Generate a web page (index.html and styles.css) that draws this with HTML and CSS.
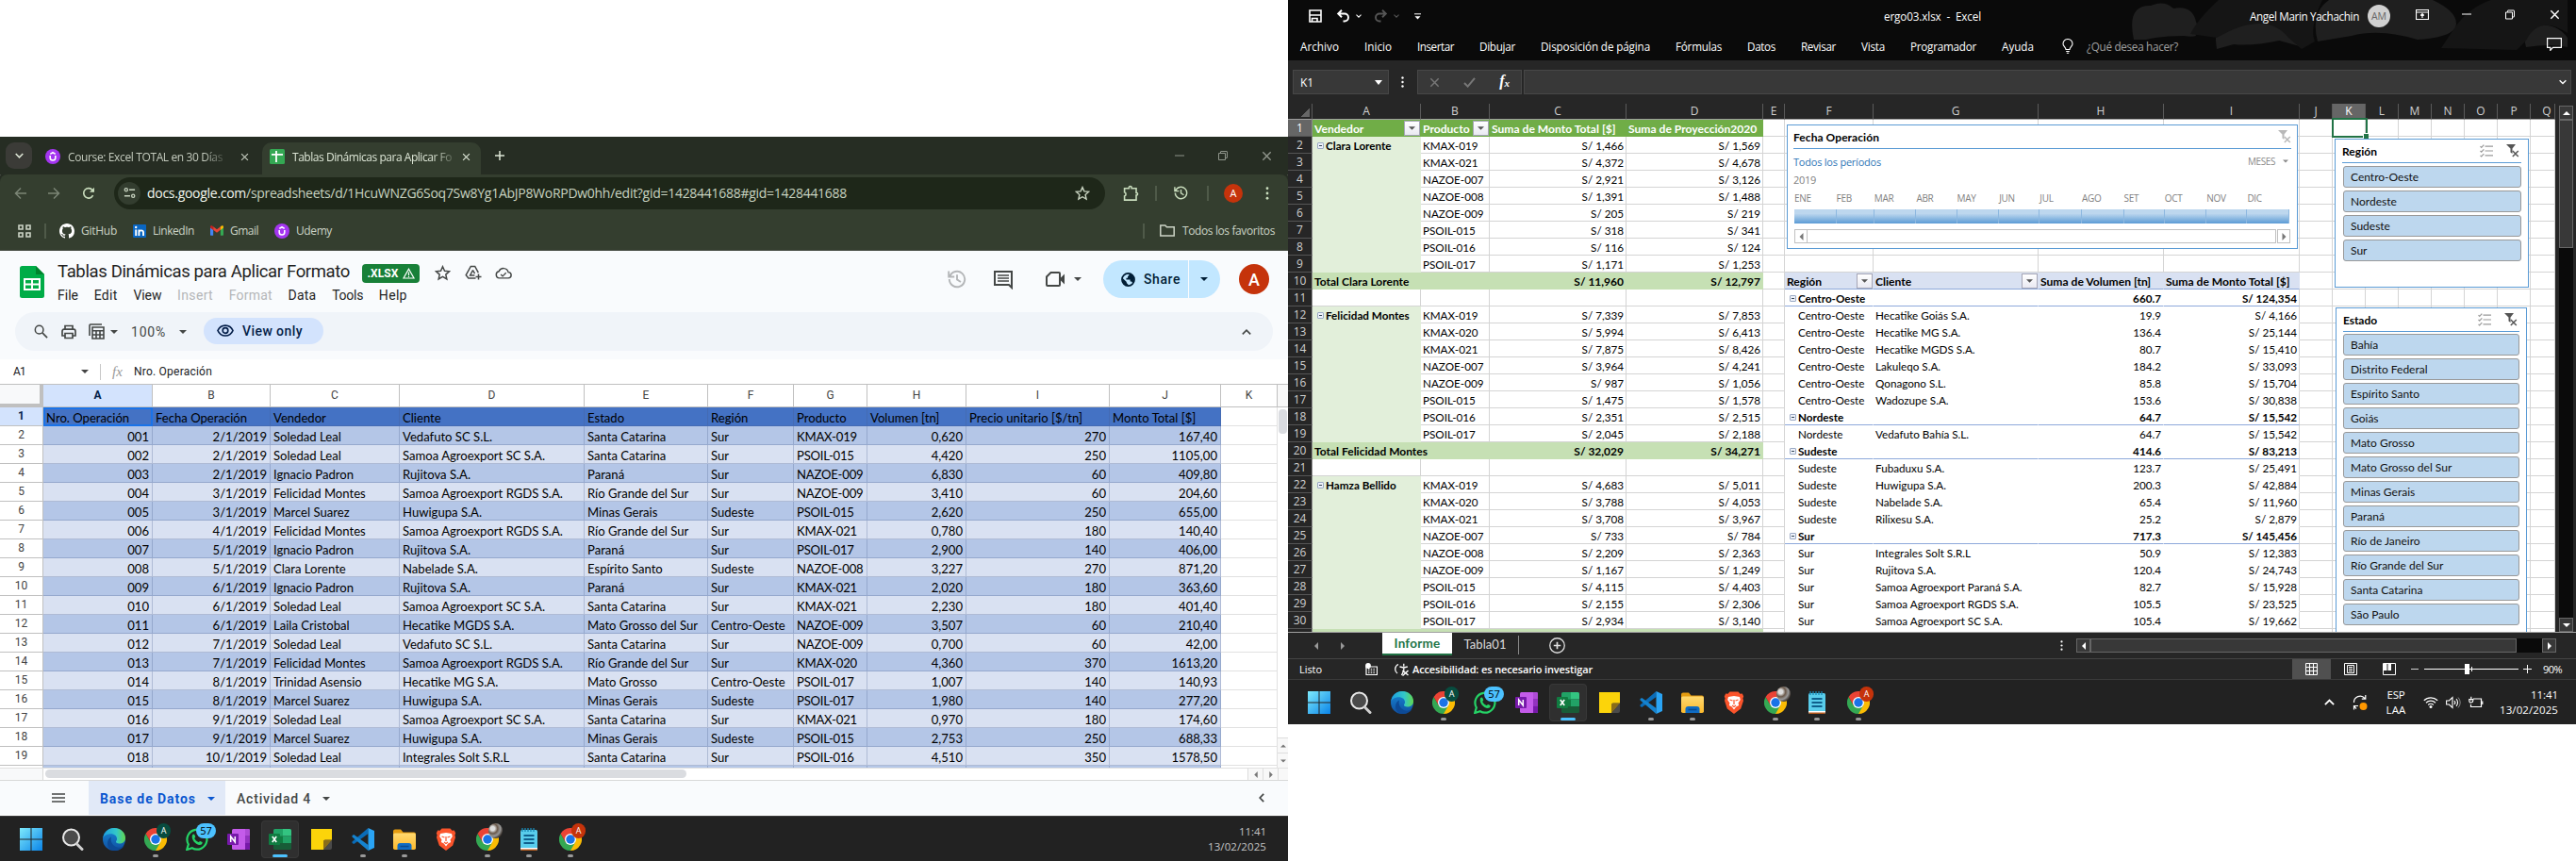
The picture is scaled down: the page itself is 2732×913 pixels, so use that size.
FILE: index.html
```html
<!DOCTYPE html>
<html lang="es">
<head>
<meta charset="utf-8">
<title>ergo03</title>
<link rel="stylesheet" href="styles.css">
</head>
<body>
<svg class="defs" aria-hidden="true">
  <defs>
    <linearGradient id="gWin" x1="0" y1="0" x2="1" y2="1"><stop offset="0" stop-color="#7eeafc"/><stop offset="1" stop-color="#0a84e8"/></linearGradient>
    <linearGradient id="gEdge" x1="0" y1="0" x2="1" y2="0"><stop offset="0" stop-color="#1c9de0"/><stop offset=".6" stop-color="#33c8c8"/><stop offset="1" stop-color="#62d84e"/></linearGradient>
    <linearGradient id="gEdge2" x1="0" y1="0" x2="0" y2="1"><stop offset="0" stop-color="#1787d6"/><stop offset="1" stop-color="#1050a0"/></linearGradient>
    <linearGradient id="gFold" x1="0" y1="0" x2="0" y2="1"><stop offset="0" stop-color="#ffd970"/><stop offset="1" stop-color="#fcb92c"/></linearGradient>
  </defs>
  <symbol id="udemy" viewBox="0 0 16 16"><circle cx="8" cy="8" r="8" fill="#a435f0"/><path d="M5.2 7v2.2a2.8 2.8 0 0 0 5.6 0V7M5.3 5.4 8 3.7l2.7 1.7" fill="none" stroke="#fff" stroke-width="1.6"/></symbol>
  <symbol id="gsheet" viewBox="0 0 16 16"><rect width="16" height="16" rx="1.5" fill="#34a853"/><path d="M2 5.800h12M7 2v12" stroke="#fff" stroke-width="1.8"/></symbol>
  <symbol id="close" viewBox="0 0 10 10"><path d="M1.2 1.2l7.6 7.6M8.8 1.2 1.2 8.8" stroke="currentColor" stroke-width="1.3" fill="none"/></symbol>
  <symbol id="plus" viewBox="0 0 12 12"><path d="M6 1v10M1 6h10" stroke="currentColor" stroke-width="1.5"/></symbol>
  <symbol id="min" viewBox="0 0 10 10"><path d="M0 5h10" stroke="currentColor"/></symbol>
  <symbol id="restore" viewBox="0 0 10 10"><path d="M.5 2.5h7v7h-7zM2.5 2.3V.9q0-.4.4-.4H9q.5 0 .5.5v6.1q0 .4-.4.4H7.7" fill="none" stroke="currentColor"/></symbol>
  <symbol id="back" viewBox="0 0 14 14"><path d="M13 7H1.8M7 1.5 1.5 7 7 12.5" fill="none" stroke="currentColor" stroke-width="1.5"/></symbol>
  <symbol id="fwd" viewBox="0 0 14 14"><path d="M1 7h11.2M7 1.5 12.5 7 7 12.5" fill="none" stroke="currentColor" stroke-width="1.5"/></symbol>
  <symbol id="reload" viewBox="0 0 14 14"><path d="M11.6 9.2A5.2 5.2 0 1 1 11 3.6l1.3 1.4" fill="none" stroke="currentColor" stroke-width="1.6"/><path d="M13 .8v5H8z" fill="currentColor"/></symbol>
  <symbol id="tune" viewBox="0 0 14 14"><path d="M6.5 3.5H13M1 10.5h6.5" stroke="currentColor" stroke-width="1.6"/><circle cx="3" cy="3.5" r="1.7" fill="none" stroke="currentColor" stroke-width="1.4"/><circle cx="11" cy="10.5" r="1.7" fill="none" stroke="currentColor" stroke-width="1.4"/></symbol>
  <symbol id="star" viewBox="0 0 16 16"><path d="M8 1.6l1.9 4.3 4.7.5-3.5 3.1 1 4.6L8 11.7l-4.1 2.4 1-4.6L1.4 6.4l4.7-.5z" fill="none" stroke="currentColor" stroke-width="1.4"/></symbol>
  <symbol id="puzzle" viewBox="0 0 16 16"><path d="M1.5 3.5H6V2.7a1.3 1.3 0 0 1 2.6 0v.8h4.6V8h.6a1.3 1.3 0 0 1 0 2.4h-.6v4.8H1.5v-4a2 2 0 0 0 0-3.8z" fill="none" stroke="currentColor" stroke-width="1.5"/></symbol>
  <symbol id="history" viewBox="0 0 20 20"><path d="M2.3 7.2A8.2 8.2 0 1 1 1.8 10M1.2 1.5v6h6M10 5.2v5.2l4 2.6" fill="none" stroke="currentColor" stroke-width="1.9"/></symbol>
  <symbol id="dots" viewBox="0 0 4 16"><circle cx="2" cy="2" r="1.6" fill="currentColor"/><circle cx="2" cy="8" r="1.6" fill="currentColor"/><circle cx="2" cy="14" r="1.6" fill="currentColor"/></symbol>
  <symbol id="apps" viewBox="0 0 14 14"><path d="M1 1h4v4H1zM9 1h4v4H9zM1 9h4v4H1zM9 9h4v4H9z" fill="none" stroke="currentColor" stroke-width="1.6"/></symbol>
  <symbol id="github" viewBox="0 0 16 16"><path fill="#fff" d="M8 0C3.58 0 0 3.58 0 8c0 3.54 2.29 6.53 5.47 7.59.4.07.55-.17.55-.38 0-.19-.01-.82-.01-1.49-2.01.37-2.53-.49-2.69-.94-.09-.23-.48-.94-.82-1.13-.28-.15-.68-.52-.01-.53.63-.01 1.08.58 1.23.82.72 1.21 1.87.87 2.33.66.07-.52.28-.87.51-1.07-1.78-.2-3.64-.89-3.64-3.95 0-.87.31-1.59.82-2.15-.08-.2-.36-1.02.08-2.12 0 0 .67-.21 2.2.82.64-.18 1.32-.27 2-.27s1.36.09 2 .27c1.53-1.04 2.2-.82 2.2-.82.44 1.1.16 1.92.08 2.12.51.56.82 1.27.82 2.15 0 3.07-1.87 3.75-3.65 3.95.29.25.54.73.54 1.48 0 1.07-.01 1.93-.01 2.2 0 .21.15.46.55.38A8.01 8.01 0 0 0 16 8c0-4.42-3.58-8-8-8z"/></symbol>
  <symbol id="linkedin" viewBox="0 0 14 14"><rect width="14" height="14" rx="1" fill="#0a66c2"/><path d="M3.2 5.5V12M6.4 5.5V12M6.4 8.6c0-3 4.6-3 4.6 0V12" fill="none" stroke="#fff" stroke-width="1.9"/><circle cx="3.2" cy="3" r="1.2" fill="#fff"/></symbol>
  <symbol id="gmail" viewBox="0 0 16 12"><path d="M0 2v9.2q0 .8.8.8H3.6V4.5z" fill="#4285f4"/><path d="M16 2v9.2q0 .8-.8.8h-2.8V4.5z" fill="#34a853"/><path d="M3.6 5.2V1.2L8 4.5l4.4-3.3v4L8 8.5z" fill="#ea4335"/><path d="M0 1.6v1L3.6 5.3V1.2L2.7.5C1.5-.4 0 .2 0 1.6z" fill="#c5221f"/><path d="M16 1.6v1l-3.6 2.7V1.2l.9-.7C14.5-.4 16 .2 16 1.6z" fill="#fbbc04"/></symbol>
  <symbol id="folder" viewBox="0 0 16 13"><path d="M.8 1h5l1.6 1.8h7.8V12H.8z" fill="none" stroke="currentColor" stroke-width="1.5"/></symbol>
  <symbol id="drive" viewBox="0 0 18 18"><path d="M11.5 15H3.8L1.2 11.7 6.3 2.5h4.4l3.6 6.6M8.5 6.5 5.6 12h4.8M8.5 6.5l2 3.6" fill="none" stroke="currentColor" stroke-width="1.5"/><path d="M14.5 10.5v6M11.5 13.5h6" stroke="currentColor" stroke-width="1.5"/></symbol>
  <symbol id="cloud" viewBox="0 0 20 14"><path d="M5 13a4 4 0 0 1-.4-7.9A5.8 5.8 0 0 1 15.6 6 3.5 3.5 0 0 1 15.5 13z" fill="none" stroke="currentColor" stroke-width="1.6"/><path d="M6.8 8.6l2.2 2.2 4-4" fill="none" stroke="currentColor" stroke-width="1.5"/></symbol>
  <symbol id="comment" viewBox="0 0 20 20"><path d="M1 1h18v17l-3-3H1z" fill="none" stroke="currentColor" stroke-width="2"/><path d="M4 5h12M4 8h12M4 11h12" stroke="currentColor" stroke-width="1.7"/></symbol>
  <symbol id="meet" viewBox="0 0 20 16"><path d="M5.5 1H14q1 0 1 1v12q0 1-1 1H2q-1 0-1-1V5.5z" fill="none" stroke="currentColor" stroke-width="2"/><path d="M15 7.5 20 2.5v11l-5-5z" fill="currentColor"/></symbol>
  <symbol id="globe" viewBox="0 0 16 16"><circle cx="8" cy="8" r="7" fill="none" stroke="currentColor" stroke-width="1.8"/><path d="M1.5 6l4.7 4.6v1.2L8 13.5V15A7 7 0 0 1 1.5 6zM9 1.2V3L7.5 4.6v1.6H5.8V8h4.4v2h1.6l1.4 2.2A7 7 0 0 0 9 1.2z" fill="currentColor"/></symbol>
  <symbol id="caret" viewBox="0 0 8 4"><path d="M0 0h8L4 4z" fill="currentColor"/></symbol>
  <symbol id="mag" viewBox="0 0 16 16"><circle cx="6" cy="6" r="4.6" fill="none" stroke="currentColor" stroke-width="1.6"/><path d="M9.5 9.5 15 15" stroke="currentColor" stroke-width="1.8"/></symbol>
  <symbol id="print" viewBox="0 0 16 16"><path d="M4 5V1.5h8V5M4 12H1V7.5Q1 5.2 3 5.2h10q2 0 2 2.3V12h-3M4 9.5h8v5H4z" fill="none" stroke="currentColor" stroke-width="1.7"/></symbol>
  <symbol id="calc" viewBox="0 0 17 17"><path d="M1 13V2q0-1 1-1h12" fill="none" stroke="currentColor" stroke-width="1.6"/><path d="M4 4h12v12H4zM4.5 7.7h11M8 8v8M12 8v8M4 12h12" fill="none" stroke="currentColor" stroke-width="1.6"/></symbol>
  <symbol id="eye" viewBox="0 0 18 13"><path d="M1 6.5C4-.8 14-.8 17 6.5 14 13.8 4 13.8 1 6.5z" fill="none" stroke="currentColor" stroke-width="1.7"/><circle cx="9" cy="6.5" r="2.8" fill="none" stroke="currentColor" stroke-width="1.7"/></symbol>
  <symbol id="cup" viewBox="0 0 10 6"><path d="M.8 5.4 5 1.2l4.200 4.200" fill="none" stroke="currentColor" stroke-width="1.6"/></symbol>
  <symbol id="cdown" viewBox="0 0 10 6"><path d="M.8.8 5 5 9.200.8" fill="none" stroke="currentColor" stroke-width="1.7"/></symbol>
  <symbol id="cleft" viewBox="0 0 6 10"><path d="M5.200.8 1.200 5l4 4.200" fill="none" stroke="currentColor" stroke-width="1.7"/></symbol>
  <symbol id="burger" viewBox="0 0 14 10"><path d="M0 1h14M0 5h14M0 9h14" stroke="currentColor" stroke-width="1.5"/></symbol>
  <symbol id="tl" viewBox="0 0 4 8"><path d="M4 0v8L0 4z" fill="currentColor"/></symbol>
  <symbol id="tr" viewBox="0 0 4 8"><path d="M0 0v8l4-4z" fill="currentColor"/></symbol>
  <symbol id="tu" viewBox="0 0 8 4"><path d="M0 4h8L4 0z" fill="currentColor"/></symbol>
  <symbol id="save" viewBox="0 0 14 14"><path d="M1 1h12v12H1zM3.500 13V9.500h5.500V13" fill="none" stroke="currentColor" stroke-width="1.600"/><path d="M1 6h12" stroke="currentColor" stroke-width="1.500"/></symbol>
  <symbol id="undo" viewBox="0 0 14 14"><path d="M1.500 4.500H8.500a4 4 0 0 1 0 8H7M5.500.8 1.700 4.500l3.800 3.700" fill="none" stroke="currentColor" stroke-width="1.900"/></symbol>
  <symbol id="redo" viewBox="0 0 14 14"><path d="M12.500 4.500H5.500a4 4 0 0 0 0 8H7M8.500.8l3.800 3.700-3.800 3.700" fill="none" stroke="currentColor" stroke-width="1.900"/></symbol>
  <symbol id="ribbon" viewBox="0 0 14 11"><path d="M.5.5h13v10H.5zM.5 3h13M7 9V4.800M5.200 6.500 7 4.700l1.800 1.800" fill="none" stroke="currentColor" stroke-width="1.200"/></symbol>
  <symbol id="bulb" viewBox="0 0 12 16"><path d="M4 11.500C4 9 1 8.200 1 5.500a5 5 0 0 1 10 0C11 8.200 8 9 8 11.500zM4.200 13.500h3.600M4.800 15.300h2.400" fill="none" stroke="currentColor" stroke-width="1.100"/></symbol>
  <symbol id="bubble" viewBox="0 0 16 14"><path d="M.6.6h14.800v9.800H6.500L3.800 13.400v-3H.6z" fill="none" stroke="currentColor" stroke-width="1.200"/></symbol>
  <symbol id="check" viewBox="0 0 14 12"><path d="M1 6.500l4 4L13 1" fill="none" stroke="currentColor" stroke-width="2.200"/></symbol>
  <symbol id="multi" viewBox="0 0 14 14"><path d="M5.500 2.200H14M5.500 7H14M5.500 11.800H14M.5 2.200l1.200 1.200L4.300.6M.5 7l1.200 1.200L4.300 5.400M.5 11.800 1.700 13l2.600-2.800" fill="none" stroke="currentColor" stroke-width="1.200"/></symbol>
  <symbol id="funnel" viewBox="0 0 14 14"><path d="M0 0h10L6.500 4.500V10l-2-1.500v-4z" fill="currentColor"/><path d="M6.800 7l6 6M12.800 7l-6 6" stroke="currentColor" stroke-width="1.500"/></symbol>
  <symbol id="addc" viewBox="0 0 16 16"><circle cx="8" cy="8" r="7.300" fill="none" stroke="currentColor" stroke-width="1.200"/><path d="M8 4.500v7M4.500 8h7" stroke="currentColor" stroke-width="1.600"/></symbol>
  <symbol id="macro" viewBox="0 0 13 13"><path d="M1 4h11.500v8.500H1z" fill="none" stroke="currentColor" stroke-width="1.200"/><path d="M3 6.500h8M3 8.500h8M3 10.500h8" stroke="currentColor" stroke-dasharray="1.500 1.200"/><circle cx="3" cy="3" r="2.900" fill="currentColor"/></symbol>
  <symbol id="access" viewBox="0 0 16 14"><path d="M4 1.500a5.500 5.500 0 0 0-1 9.500M9.800.8v3M5.500 4l4.300 1 4-1M9.800 5v3l-2.300 5" fill="none" stroke="currentColor" stroke-width="1.300"/><path d="M8.500 8l6 5M14.500 8l-6 5.500" stroke="currentColor" stroke-width="1.500"/></symbol>
  <symbol id="vgrid" viewBox="0 0 13 13"><path d="M.5.5h12v12H.5zM.5 4.500h12M.5 8.500h12M4.500.5v12M8.500.5v12" fill="none" stroke="currentColor"/></symbol>
  <symbol id="vpage" viewBox="0 0 14 13"><path d="M.5.5h13v12H.5zM3.500 2.500h7v8h-7zM5 4.500h4M5 6.500h4M5 8.500h4" fill="none" stroke="currentColor"/></symbol>
  <symbol id="vbreak" viewBox="0 0 14 13"><path d="M.5.5h13v12H.5z" fill="none" stroke="currentColor"/><path d="M1 1h3.500v7H1zM5.500 1H9v7H5.500z" fill="currentColor"/></symbol>
  <symbol id="sync" viewBox="0 0 18 18"><path d="M2.500 9A6.500 6.500 0 0 1 14 4.500M14.800 1v4.200h-4M5 15.500A6.500 6.500 0 0 1 3 12.500M2.500 16.500v-4H7" fill="none" stroke="#fff" stroke-width="1.200"/><circle cx="12.500" cy="13" r="4" fill="#ff9800"/></symbol>
  <symbol id="wifi" viewBox="0 0 16 13"><path d="M.8 4.800a10.300 10.300 0 0 1 14.400 0M3 7.200a7.200 7.200 0 0 1 10 0M5.200 9.500a4 4 0 0 1 5.600 0" fill="none" stroke="#fff" stroke-width="1.200"/><circle cx="8" cy="11.500" r="1.500" fill="#fff"/></symbol>
  <symbol id="vol" viewBox="0 0 16 14"><path d="M.6 5h2.800L7 1.500v11L3.400 9H.6zM9 5a3 3 0 0 1 0 4M11 3.200a5.500 5.500 0 0 1 0 7.600" fill="none" stroke="#fff" stroke-width="1.100"/><path d="M13 1.500a8 8 0 0 1 0 11" fill="none" stroke="#888"/></symbol>
  <symbol id="batt" viewBox="0 0 16 13"><path d="M5 3h8.500v8.500h-11V9M14.800 5.500v3.500M2.800.8v4M.8 3.500h4v1.200q0 2-2 2.300t-2-2.300z" fill="none" stroke="#fff" stroke-width="1.200"/></symbol>
  <symbol id="t-win" viewBox="0 0 24 24"><path d="M0 0h11.500v11.500H0zM12.500 0H24v11.500H12.500zM0 12.500h11.500V24H0zM12.500 12.500H24V24H12.500z" fill="url(#gWin)"/></symbol>
  <symbol id="t-search" viewBox="0 0 24 24"><circle cx="10.500" cy="10" r="8.500" fill="#4b4b4b" stroke="#e8e8e8" stroke-width="2"/><path d="M16.500 17 22 22.500" stroke="#d0d0d0" stroke-width="3" stroke-linecap="round"/></symbol>
  <symbol id="t-edge" viewBox="0 0 24 24"><circle cx="12" cy="12" r="12" fill="url(#gEdge2)"/><path d="M.2 11C1 4.500 6 0 12 0c7 0 12 5 12 10.500 0 4-3 6-6.500 6-2.500 0-4-1-3.500-2.200 1-1.300 1-2 1-3 0-2.500-2.500-5-6.500-5C4.500 6.300.8 8.500.2 11z" fill="url(#gEdge)"/><path d="M9 9.500c-1.500 5 2 10 6.500 11 3 .6 5.500-.3 7.500-2.500-2 4-6 6-10 6-5 0-8-3.500-8-7.500C5 13 6.800 10.500 9 9.500z" fill="#0d4a96"/></symbol>
  <symbol id="t-chrome" viewBox="0 0 24 24"><path d="M12 12V6h10.400A12 12 0 0 1 12 24z" fill="#fbbc04"/><path d="M12 12 6.800 15 1.600 6A12 12 0 0 0 12 24l5.200-9z" fill="#34a853"/><path d="M12 6H22.400A12 12 0 0 0 1.600 6l5.200 9z" fill="#ea4335"/><circle cx="12" cy="12" r="6" fill="#fff"/><circle cx="12" cy="12" r="4.700" fill="#1a73e8"/></symbol>
  <symbol id="t-wa" viewBox="0 0 24 24"><path d="M1.200 23 2.800 17.300A10.500 10.500 0 1 1 6.800 21.300z" fill="none" stroke="#25d366" stroke-width="2.200"/><path d="M7 7.500c.8-1.300 2-1.200 2.400-.3l.8 2c.2.700-1 1.500-1 1.900 1 2 2.300 3.200 4.300 4 .5 0 1.200-1.300 1.800-1.200l2.200 1.100c.5.400 0 2.200-1.500 2.800C11.500 19 5.200 12.500 7 7.500z" fill="#25d366"/></symbol>
  <symbol id="t-one" viewBox="0 0 24 24"><rect x="5" y="1" width="19" height="22" rx="1.500" fill="#c45bea"/><path d="M19 1h3.500Q24 1 24 2.500V8h-5z" fill="#ae4bd5"/><path d="M19 8h5v7.500h-5z" fill="#9332bf"/><path d="M19 15.500h5v6q0 1.500-1.500 1.500H19z" fill="#7719aa"/><rect y="6" width="12" height="12" rx="1" fill="#7719aa"/><path d="M3.700 15V9l4.600 6V9" fill="none" stroke="#fff" stroke-width="1.500"/></symbol>
  <symbol id="t-excel" viewBox="0 0 24 24"><path d="M5 2.500Q5 1 6.500 1H15v11H5z" fill="#21a366"/><path d="M15 1h7.500Q24 1 24 2.500V8.500h-9z" fill="#33c481"/><path d="M5 8.500h10V16H5z" fill="#107c41"/><path d="M15 8.500h9V16h-9z" fill="#21a366"/><path d="M5 16h19v5.500q0 1.500-1.500 1.500h-16Q5 23 5 21.500z" fill="#185c37"/><rect y="6" width="12" height="12" rx="1" fill="#107c41"/><path d="M3.800 9l4.400 6M8.200 9l-4.400 6" stroke="#fff" stroke-width="1.600"/></symbol>
  <symbol id="t-note" viewBox="0 0 24 24"><path d="M1 1h22v11.500l-9 10.500H1z" fill="#fcd40a"/><path d="M23 12.500V21q0 2-2 2h-7z" fill="#4a4a4a"/><path d="M14 23V14.500q0-2 2-2h7z" fill="#333"/><path d="M14 15q0-2.500 2.500-2.500H23L14 23z" fill="#e0a800" opacity=".5"/></symbol>
  <symbol id="t-code" viewBox="0 0 24 24"><path d="M17.500 0v6L2.300 17 .5 16v-1.500z" fill="#0a6cb8"/><path d="M17.500 24V18L2.300 7 .5 8v1.500z" fill="#1583cf"/><path d="M17.500 0 24 3v18l-6.500 3z" fill="#2aa4f4"/></symbol>
  <symbol id="t-dir" viewBox="0 0 24 24"><path d="M0 3.500Q0 1.500 2 1.500h6l2.500 3H22q2 0 2 2V12H0z" fill="#e59c10"/><rect y="5.500" width="24" height="17.500" rx="1.800" fill="url(#gFold)"/><path d="M4.500 23v-4q0-3 3-3h9q3 0 3 3v4z" fill="#0f6cc4"/><path d="M7.500 19.500h9" stroke="#0a4b90" stroke-width="1.600"/></symbol>
  <symbol id="t-brave" viewBox="0 0 24 24"><path d="M7.500.5h9l2 2.200 2.300-.2 1.400 3-.8 2 .6 2.500-2.800 8.500L12 24l-7.200-5.500L2 10l.6-2.500-.8-2 1.400-3 2.300.2z" fill="#fb542b"/><path d="M6 6l6-1 6 1 .8 3-2.300 3.500.7 2.500-3 1.500L12 19.500l-2.200-3-3-1.500.7-2.500L5.200 9z" fill="#fff"/><path d="M7.500 9l3 1M16.500 9l-3 1M12 9v5M10 15l2 1.500 2-1.500" stroke="#fb542b" stroke-width="1.200" fill="none"/></symbol>
  <symbol id="t-pad" viewBox="0 0 24 24"><rect x="3" y="2" width="18" height="22" rx="1.500" fill="#59cdeb"/><path d="M3 21h18v1.500q0 1.500-1.500 1.500h-15Q3 24 3 22.500z" fill="#b35a1f"/><path d="M3 21h18v1.500H3z" fill="#fff"/><path d="M6.500 8h11M6.500 12h11M6.500 16h11" stroke="#0f5f8c" stroke-width="1.800"/><path d="M5 0v4M8 0v4M11 0v4M14 0v4M17 0v4" stroke="#1a89b5" stroke-width="1.300"/></symbol>
</svg>

<div class="desk">
<section class="win chrome">
  <div class="tabstrip">
    <div class="tabsearch"><svg width="9" height="6"><use href="#cdown"/></svg></div>
    <div class="tab"><svg width="16" height="16"><use href="#udemy"/></svg><span class="tname"><span data-w="164">Course: Excel TOTAL en 30 Días</span></span><svg width="9" height="9"><use href="#close"/></svg></div>
    <div class="tab active"><svg width="16" height="16"><use href="#gsheet"/></svg><span class="tname wide"><span data-w="169">Tablas Dinámicas para Aplicar Fo</span></span><svg width="9" height="9"><use href="#close"/></svg></div>
    <svg class="newtab" width="12" height="12"><use href="#plus"/></svg>
    <div class="wctl"><svg width="10" height="10"><use href="#min"/></svg><svg width="10" height="10"><use href="#restore"/></svg><svg width="11" height="11"><use href="#close"/></svg></div>
  </div>
  <div class="nav">
    <svg class="dim" width="14" height="14"><use href="#back"/></svg>
    <svg class="dim n-fwd" width="14" height="14"><use href="#fwd"/></svg>
    <svg class="n-rel" width="14" height="14"><use href="#reload"/></svg>
    <div class="omni"><span class="tunec"><svg width="13" height="13"><use href="#tune"/></svg></span><span class="url" data-w="742"><b>docs.google.com</b>/spreadsheets/d/1HcuWNZG6Soq7Sw8Yg1AbJP8WoRPDw0hh/edit?gid=1428441688#gid=1428441688</span><svg class="push" width="16" height="16"><use href="#star"/></svg></div>
    <svg class="n-ext" width="17" height="17"><use href="#puzzle"/></svg><i class="vbar n-v"></i>
    <svg class="n-hist" width="15" height="15"><use href="#history"/></svg><i class="vbar n-v"></i>
    <span class="ava s20">A</span><svg class="n-dots" width="4" height="14"><use href="#dots"/></svg>
  </div>
  <div class="marks">
    <svg width="14" height="14"><use href="#apps"/></svg><i class="vbar m-v"></i>
    <div class="mark"><svg width="16" height="16"><use href="#github"/></svg><span data-w="38">GitHub</span></div>
    <div class="mark"><svg width="14" height="14"><use href="#linkedin"/></svg><span data-w="44">LinkedIn</span></div>
    <div class="mark"><svg width="14" height="11"><use href="#gmail"/></svg><span data-w="30">Gmail</span></div>
    <div class="mark"><svg width="16" height="16"><use href="#udemy"/></svg><span data-w="38">Udemy</span></div>
    <i class="vbar push"></i><svg class="m-f" width="16" height="13"><use href="#folder"/></svg><span data-w="98">Todos los favoritos</span>
  </div>
  <div class="gdoc">
    <svg class="glogo" width="26" height="34" viewBox="0 0 26 34"><path d="M2.500 0H17l9 9v22.500q0 2.500-2.500 2.500h-21Q0 34 0 31.500v-29Q0 0 2.500 0z" fill="#00ac47"/><path d="M17 0l9 9h-9z" fill="#00832d"/><path d="M5 14h16v11H5zM5 19.500h16M13 14v11" fill="none" stroke="#fff" stroke-width="2"/></svg>
    <div class="gmid">
      <div class="grow"><span class="gtitle" data-w="310">Tablas Dinámicas para Aplicar Formato</span>
        <span class="badge"><span data-w="33">.XLSX</span><svg width="13" height="12" viewBox="0 0 13 12"><path d="M6.500 1.200l5.500 9.800H1zM6.500 4.500v3.500M6.500 8.800v1.300" fill="none" stroke="#fff" stroke-width="1.200"/></svg></span>
        <svg class="g1" width="17" height="17"><use href="#star"/></svg><svg class="g2" width="18" height="18"><use href="#drive"/></svg><svg class="g3" width="18" height="13"><use href="#cloud"/></svg></div>
      <div class="gmenu"><span data-w="22">File</span><span data-w="25">Edit</span><span data-w="30">View</span><span class="off" data-w="38">Insert</span><span class="off" data-w="46">Format</span><span data-w="30">Data</span><span data-w="33">Tools</span><span data-w="30">Help</span></div>
    </div>
    <svg class="h1 off" width="20" height="20"><use href="#history"/></svg>
    <svg class="h2" width="20" height="20"><use href="#comment"/></svg>
    <svg class="h3" width="20" height="16"><use href="#meet"/></svg><svg class="h4" width="8" height="4"><use href="#caret"/></svg>
    <div class="share"><svg width="15" height="15"><use href="#globe"/></svg><span data-w="39">Share</span><i></i><svg width="8" height="4"><use href="#caret"/></svg></div>
    <span class="ava s32">A</span>
  </div>
  <div class="gbar">
    <svg width="15" height="15"><use href="#mag"/></svg><svg class="b1" width="16" height="16"><use href="#print"/></svg><svg class="b2" width="17" height="17"><use href="#calc"/></svg><svg class="b3" width="8" height="4"><use href="#caret"/></svg>
    <span class="b4" data-w="37">100%</span><svg class="b5" width="8" height="4"><use href="#caret"/></svg>
    <div class="vo"><svg width="18" height="13"><use href="#eye"/></svg><span data-w="64">View only</span></div>
    <svg class="push" width="10" height="6"><use href="#cup"/></svg>
  </div>
  <div class="gfx"><span class="ref" data-w="13">A1</span><svg width="8" height="4"><use href="#caret"/></svg><i></i><em>fx</em><span data-w="83">Nro. Operación</span></div>
  <div class="gsheet"><div class="ggrid" id="ggrid"></div><div class="gv"><i class="gvtop"></i><i class="gvthumb"></i><span class="push"><svg width="6" height="4"><use href="#tu"/></svg></span><span><svg width="6" height="4"><use href="#caret"/></svg></span></div></div>
  <div class="ghs"><i class="gh0"></i><i class="ghthumb"></i><span class="push"><svg width="4" height="7"><use href="#tl"/></svg></span><span><svg width="4" height="7"><use href="#tr"/></svg></span><b></b></div>
  <div class="gtabs"><svg width="14" height="10"><use href="#burger"/></svg><div class="gt on"><span data-w="102">Base de Datos</span><svg width="8" height="4"><use href="#caret"/></svg></div><div class="gt"><span data-w="79">Actividad 4</span><svg width="8" height="4"><use href="#caret"/></svg></div><svg class="push" width="6" height="10"><use href="#cleft"/></svg></div>
  <div class="taskbar"><div class="tiles"></div><div class="clock dimclock"><span data-w="29">11:41</span><span data-w="62">13/02/2025</span></div></div>
</section>

<section class="win excel">
  <div class="xtop">
    <svg class="pattern" width="460" height="64" viewBox="0 0 460 64"><g fill="#1f1f1f"><path d="M0 42Q-8 5 18 6q14-6 24 3 20-4 24 14 4 8-1 10 6 8-12 5-24 0-40 4z"/><path d="M88 52Q82 16 108 18q28-8 44 6 20 0 22 18l2 7-22-6q-28 6-48 4z"/><path d="M195 44q-8-30 12-44h110q30 14 24 30-8 10-40 12-40-12-70-4z"/><path d="M416 50q-6-22 14-24 20 0 30 14v10q-18-4-44 0z"/></g><g fill="#151515"><path d="M60 36q8-16 30-36h110q-14 30-8 44l-14 8-14-12Q140 10 88 40z"/><path d="M340 30Q360 0 400-5h60v40q-30-20-44 8l-10 10-80-2z"/></g></svg>
    <div class="xtitle">
      <svg width="14" height="14"><use href="#save"/></svg><svg class="q1" width="15" height="14"><use href="#undo"/></svg><svg class="q2" width="6" height="4"><use href="#cdown"/></svg><svg class="q3 dimx" width="15" height="14"><use href="#redo"/></svg><svg class="q2 dimx" width="6" height="4"><use href="#cdown"/></svg><svg class="q4" width="7" height="7" viewBox="0 0 7 7"><path d="M0 .8h7" stroke="#fff"/><path d="M.5 3.200h6L3.500 6.500z" fill="#fff"/></svg>
      <span class="fname" data-w="103">ergo03.xlsx&nbsp; -&nbsp; Excel</span>
      <span class="user" data-w="116">Angel Marin Yachachin</span><span class="am">AM</span>
      <svg class="w0" width="14" height="11"><use href="#ribbon"/></svg><svg class="w1" width="10" height="10"><use href="#min"/></svg><svg class="w2" width="10" height="11"><use href="#restore"/></svg><svg class="w3" width="11" height="11"><use href="#close"/></svg>
    </div>
    <div class="xmenu"><span data-w="41">Archivo</span><span data-w="29">Inicio</span><span data-w="39">Insertar</span><span data-w="38">Dibujar</span><span data-w="116">Disposición de página</span><span data-w="49">Fórmulas</span><span data-w="30">Datos</span><span data-w="37">Revisar</span><span data-w="25">Vista</span><span data-w="70">Programador</span><span data-w="34">Ayuda</span><svg class="k1" width="12" height="16"><use href="#bulb"/></svg><span class="ask" data-w="97">¿Qué desea hacer?</span><svg class="k2" width="16" height="14"><use href="#bubble"/></svg></div>
  </div>
  <div class="xfx">
    <div class="xbox name"><span data-w="14">K1</span><svg width="8" height="5" viewBox="0 0 8 5"><path d="M0 0h8L4 5z" fill="#fff"/></svg></div><svg class="f1" width="3" height="12"><use href="#dots"/></svg>
    <div class="xbox btns"><svg width="11" height="11"><use href="#close"/></svg><svg width="13" height="11"><use href="#check"/></svg><em>f<sub>x</sub></em></div>
    <div class="xbox long"><svg width="8" height="6"><use href="#cdown"/></svg></div>
  </div>
  <div class="xsheet">
    <div class="xgrid" id="xgrid"></div>
    <div class="xv"><span><svg width="8" height="4"><use href="#tu"/></svg></span><i></i><span class="push"><svg width="8" height="4"><use href="#caret"/></svg></span></div>
    <div class="cursor"><i></i></div>
    <div class="timeline">
      <div class="thead"><b data-w="91">Fecha Operación</b><svg width="14" height="14"><use href="#funnel"/></svg></div>
      <div class="tper"><span data-w="93">Todos los períodos</span><span class="mes"><span data-w="29">MESES</span><svg width="6" height="4"><use href="#caret"/></svg></span></div>
      <div class="tyear"><span data-w="24">2019</span></div>
      <div class="months" id="months"></div>
      <div class="tbar"><i></i><i></i><i></i><i></i><i></i><i></i><i></i><i></i><i></i><i></i><i></i><i></i></div>
      <div class="tscroll"><span><svg width="5" height="8"><use href="#tl"/></svg></span><i></i><span class="gap"><svg width="5" height="8"><use href="#tr"/></svg></span></div>
    </div>
    <div class="slicer reg"><div class="shead"><b data-w="37">Región</b><svg class="mu" width="14" height="14"><use href="#multi"/></svg><svg width="14" height="14"><use href="#funnel"/></svg></div><div class="opts" id="reg"></div></div>
    <div class="slicer est"><div class="shead"><b data-w="36">Estado</b><svg class="mu" width="14" height="14"><use href="#multi"/></svg><svg width="14" height="14"><use href="#funnel"/></svg></div><div class="opts" id="est"></div></div>
  </div>
  <div class="xtabs"><svg class="ar" width="4" height="8"><use href="#tl"/></svg><svg class="ar2" width="4" height="8"><use href="#tr"/></svg><div class="xt on"><span data-w="49">Informe</span></div><div class="xt t2"><span data-w="45">Tabla01</span></div><svg class="add" width="17" height="17"><use href="#addc"/></svg><svg class="xd" width="3" height="11"><use href="#dots"/></svg><div class="xh"><span><svg width="4" height="8"><use href="#tl"/></svg></span><i></i><span class="push"><svg width="4" height="8"><use href="#tr"/></svg></span></div></div>
  <div class="xstat"><span data-w="24">Listo</span><svg class="s1" width="13" height="13"><use href="#macro"/></svg><svg class="s2" width="16" height="14"><use href="#access"/></svg><b class="s3" data-w="191">Accesibilidad: es necesario investigar</b>
    <div class="views"><span class="on"><svg width="13" height="13"><use href="#vgrid"/></svg></span><span><svg width="14" height="13"><use href="#vpage"/></svg></span><span><svg width="14" height="13"><use href="#vbreak"/></svg></span></div>
    <svg class="z1" width="8" height="9"><use href="#min"/></svg><div class="zoom"><i></i></div><svg class="z2" width="9" height="9" viewBox="0 0 9 9"><path d="M4.500 0v9M0 4.500h9" stroke="#fff"/></svg><span class="z3" data-w="20">90%</span></div>
  <div class="taskbar"><div class="tiles"></div>
    <div class="tray"><svg width="11" height="7"><use href="#cup"/></svg><svg class="y1" width="18" height="18"><use href="#sync"/></svg><div class="lang"><span data-w="19">ESP</span><span data-w="21">LAA</span></div><svg class="y2" width="16" height="13"><use href="#wifi"/></svg><svg class="y3" width="16" height="14"><use href="#vol"/></svg><svg class="y4" width="16" height="13"><use href="#batt"/></svg></div>
    <div class="clock"><span data-w="29">11:41</span><span data-w="62">13/02/2025</span></div></div>
</section>
</div>
<script src="app.js"></script>
</body>
</html>
```

FILE: styles.css
```css
* { box-sizing: border-box; }
body { margin: 0; background: #fff; font-family: "Open Sans", "Noto Sans", sans-serif; }
svg { display: block; flex: none; overflow: visible; }
.defs { position: absolute; width: 0; height: 0; overflow: hidden; }
.desk { display: flex; align-items: flex-start; width: 2732px; height: 913px; overflow: hidden; }
.win { width: 1366px; height: 768px; flex: none; display: flex; flex-direction: column; overflow: hidden; white-space: nowrap; }
.push { margin-left: auto; }
[data-w] { white-space: pre; flex: none; }

/* browser window */
.chrome { margin-top: 145px; }
.tabstrip { height: 40px; background: #262d23; display: flex; align-items: flex-start; padding: 6px 17px 0 6px; color: #dde6d6; font-size: 12px; }
.tabsearch { width: 28px; height: 28px; border-radius: 9px; background: #3b3b37; display: grid; place-items: center; margin-right: 5px; }
.tab { height: 34px; display: flex; align-items: center; padding: 0 14px 4px 9px; width: 239px; color: #c3cabd; }
.tab.active { background: #343e2f; border-radius: 10px 10px 0 0; width: 232px; padding: 0 11px 4px 8px; color: #dde6d6; }
.tname { margin-left: 8px; width: 164px; -webkit-mask-image: linear-gradient(90deg, #000 88%, transparent); mask-image: linear-gradient(90deg, #000 88%, rgba(0, 0, 0, .25)); }
.tname span { display: inline-block; }
.tab > svg:last-child { margin-left: auto; }
.tname.wide { width: 169px; }
.newtab { margin: 8px 0 0 14px; }
.wctl { margin: 9px 0 0 auto; display: flex; gap: 36px; color: #8f958b; }
.nav { height: 41px; background: #343e2f; display: flex; align-items: center; padding: 0 20px 2px 15px; color: #c8dcbc; border-radius: 8px 8px 0 0; box-shadow: 0 -6px 0 #262d23; position: relative; clip-path: inset(0); }
.dim { color: #7c8676; }
.n-fwd { margin-left: 21px; }
.n-rel { margin-left: 23px; }
.omni { margin-left: 20px; width: 1051px; height: 34px; border-radius: 17px; background: #1e2719; display: flex; align-items: center; padding: 0 16px 0 4px; font-size: 14px; color: #c8d3c0; }
.omni b { font-weight: 400; color: #f4f8f0; }
.tunec { width: 24px; height: 24px; border-radius: 50%; background: #333d2f; display: grid; place-items: center; margin-right: 7px; }
.vbar { width: 2px; height: 16px; background: #4f5a49; }
.n-ext { margin-left: 19px; }
.n-v { margin-left: 17px; }
.n-hist { margin-left: 18px; }
.n-hist + .n-v { margin-left: 20px; }
.ava { background: #c5330b; color: #fff; border-radius: 50%; display: grid; place-items: center; flex: none; }
.s20 { width: 20px; height: 20px; font-size: 11px; margin-left: 16px; }
.n-dots { margin-left: auto; }
.marks { height: 40px; background: #343e2f; border-bottom: 1px solid #4a5048; display: flex; align-items: center; padding: 0 14px 2px 19px; font-size: 12px; color: #ccd4c6; }
.m-v { margin: 0 14px; background: #4f5a49; }
.mark { display: flex; align-items: center; gap: 7px; margin-right: 17px; }
.m-f { margin: 0 8px 0 16px; }
.gdoc { height: 65px; background: #f9fbfd; display: flex; padding: 0 20px 0 21px; color: #444746; align-items: flex-start; }
.glogo { margin-top: 16px; }
.gmid { margin-left: 14px; width: 930px; }
.grow { display: flex; align-items: center; height: 26px; margin-top: 10px; }
.gtitle { font: 18.500px Roboto, sans-serif; color: #1f1f1f; margin-top: -2px; }
.badge { background: #188038; color: #fff; font: 700 12px Roboto, sans-serif; height: 20px; width: 61px; border-radius: 4px; display: flex; align-items: center; justify-content: center; gap: 4px; margin: 1px 0 0 13px; }
.g1 { margin-left: 16px; } .g2 { margin-left: 15px; } .g3 { margin-left: 14px; }
.gmenu { display: flex; gap: 16.700px; font: 14px Roboto, sans-serif; color: #1f1f1f; margin-top: 3px; }
.off { color: #b4b6b8; }
.h1 { margin: 20px 0 0 14px; } .h2 { margin: 21px 0 0 29px; } .h3 { margin: 22px 0 0 35px; } .h4 { margin: 28px 0 0 10px; }
.share { margin: 10px 0 0 23px; width: 124px; height: 40px; border-radius: 20px; background: #c2e7ff; color: #001d35; display: flex; align-items: center; padding-left: 19px; font: 500 14px Roboto, sans-serif; }
.share span { margin-left: 9px; }
.share i { width: 1px; height: 40px; background: #f9fbfd; margin: 0 12px 0 8px; }
.s32 { width: 32px; height: 32px; margin: 14px 0 0 auto; font: 500 18px Roboto, sans-serif; }
.gbar { height: 41px; background: #f0f4f9; border-radius: 21px; margin: 0 16px; box-shadow: 0 0 0 30px #f9fbfd; clip-path: inset(0 -16px -10px -16px); display: flex; align-items: center; padding: 0 23px 0 20px; color: #444746; font: 14px Roboto, sans-serif; flex: none; }
.b1 { margin-left: 14px; } .b2 { margin-left: 13px; } .b3 { margin-left: 6px; } .b4 { margin-left: 14px; } .b5 { margin-left: 14px; }
.vo { margin: -2px 0 0 18px; height: 28px; width: 127px; border-radius: 14px; background: #d3e3fd; color: #041e49; display: flex; align-items: center; padding-left: 14px; gap: 9px; font-weight: 500; }
.gfx { height: 27px; margin-top: 9px; background: #fff; border-bottom: 1px solid #c0c0c0; display: flex; align-items: center; padding-left: 14px; font: 12px Roboto, sans-serif; color: #202124; flex: none; position: relative; }
.gfx svg { margin-left: 59px; color: #444; }
.gfx i { width: 1px; height: 17px; background: #c7c7c7; margin: 0 12px; }
.gfx em { font: italic 15px "Liberation Serif", serif; color: #999; width: 23px; }
.gsheet { height: 406px; display: flex; flex: none; overflow: hidden; background: #fff; }
.ggrid { display: grid; grid-template-columns: 46px 116px 125px 137px 196px 131px 91px 78px 105px 152px 118px 60px; grid-template-rows: 24px repeat(20, 20px); width: 1355px; font: 13.100px Lato, sans-serif; color: #000; }
.ggrid > * { border-right: 1px solid rgba(70, 90, 140, .28); border-bottom: 1px solid rgba(70, 90, 140, .28); padding: 2px 3px 0; overflow: hidden; line-height: 18px; }
.ggrid .gch { background: #fff; border-color: #c0c0c0; text-align: center; font: 12px/21px Roboto, sans-serif; color: #444; padding-top: 1px; }
.ggrid .sel { background: #d3e3fd; font-weight: 700; color: #041e49; }
.ggrid .corner { background: #f8f9fa; border-right: 4px solid #c0c0c0; border-bottom: 4px solid #c0c0c0; }
.ggrid .gr { line-height: 16px; }
.ggrid .r { text-align: right; }
.ggrid .h { background: #4472c4; }
.ggrid .o { background: #b4c6e7; }
.ggrid .e { background: #d9e1f2; }
.ggrid .w { border-color: #e1e1e1; }
.ggrid .code { letter-spacing: -.2px; }
.ggrid .cur { outline: 2px solid #1a73e8; outline-offset: -2px; }
.gv { width: 11px; display: flex; flex-direction: column; }
.gvtop { height: 24px; background: #f8f8f8; border-bottom: 1px solid #c0c0c0; }
.gvthumb { width: 9px; height: 26px; margin: 2px 1px; background: #dadce0; border-radius: 4px; }
.gv span { height: 16px; border-top: 1px solid #ddd; display: grid; place-items: center; color: #777; background: #f8f8f8; }
.gv .push { margin: auto 0 0; }
.ghs { height: 14px; display: flex; border-top: 1px solid #e1e1e1; border-bottom: 1px solid #d9d9d9; background: #fff; flex: none; }
.gh0 { width: 46px; border-right: 1px solid #d9d9d9; background: #f8f9fa; }
.ghthumb { width: 680px; height: 9px; margin: 1px 2px; border-radius: 5px; background: #dadce0; }
.ghs span { width: 16px; border-left: 1px solid #ddd; display: grid; place-items: center; color: #777; background: #f8f8f8; }
.ghs b { width: 11px; border-left: 1px solid #ddd; background: #f8f8f8; }
.gtabs { height: 36px; flex: none; background: #f9fbfd; display: flex; align-items: center; padding: 0 25px 0 55px; color: #444746; font: 500 14px Roboto, sans-serif; }
.gt { height: 36px; display: flex; align-items: center; padding: 2px 12px 0; gap: 12px; }
.gt.on { margin-left: 25px; width: 145px; background: #e1e9f7; color: #0b57d0; font-weight: 700; }

/* taskbar */
.taskbar { height: 48px; flex: none; background: #222; border-top: 1px solid #3a3a3a; display: flex; align-items: center; color: #fff; font-size: 11.500px; margin-top: auto; }
.tiles { display: flex; gap: 4px; margin-left: 13px; }
.tile { width: 40px; height: 40px; border-radius: 4px; position: relative; display: grid; place-items: center; }
.tile.on { background: #2f2f2f; outline: 1px solid #383838; outline-offset: -1px; }
.tile::after { content: ""; position: absolute; left: 17px; bottom: 1px; width: 6px; height: 3px; border-radius: 2px; }
.tile.run::after { background: #9a9a9a; }
.tile.on::after { left: 12px; width: 16px; background: #4cc2ff; }
.pip { position: absolute; right: 4px; top: 3px; width: 15px; height: 16px; border-radius: 8px; background: #c5330b; display: grid; place-items: center; font-size: 9px; line-height: 15px; }
.pip.g { background: #084c3f; }
.pip.n { width: 21px; right: 0; background: #4cc2ff; color: #000; font-size: 11px; }
.pip.p { background: radial-gradient(circle at 30% 35%, #ddd 15%, #6b5a4c 35%, #999 55%, #3c342e 75%); }
.clock { display: flex; flex-direction: column; align-items: flex-end; line-height: 16px; margin-right: 19px; }
.dimclock { margin: 0 23px 0 auto; color: #c4c4c4; }
.tray { margin-left: auto; display: flex; align-items: center; margin-right: 17px; }
.y1 { margin-left: 18px; }
.lang { width: 58px; display: flex; flex-direction: column; align-items: center; line-height: 16px; }
.y3 { margin-left: 8px; } .y4 { margin-left: 8px; }

/* spreadsheet window */
.xtop { height: 64px; background: #0a0a0a; color: #fff; position: relative; flex: none; font-size: 11.700px; }
.pattern { position: absolute; right: 0; top: 0; width: 478px; height: 64px; overflow: hidden; }
.xtitle, .xmenu { position: relative; display: flex; align-items: center; }
.xtitle { height: 34px; padding-left: 22px; }
.q1 { margin-left: 15px; } .q2 { margin-left: 6px; } .q3 { margin-left: 13px; } .q4 { margin-left: 16px; }
.dimx { color: #555; }
.fname { margin-left: 491px; }
.user { margin-left: 285px; }
.am { width: 24px; height: 24px; border-radius: 50%; background: #d0d0d0; color: #666; font-size: 10.500px; display: grid; place-items: center; margin-left: 9px; flex: none; }
.w0 { margin-left: 27px; } .w1 { margin-left: 35px; } .w2 { margin-left: 36px; } .w3 { margin-left: 37px; }
.xtitle .w0, .xtitle .w1, .xtitle .w2, .xtitle .w3 { margin-bottom: 4px; }
.xmenu { height: 30px; gap: 27px; padding-left: 13px; }
.ask { margin-left: -13px; color: #a0a0a0; }
.k1 { margin-left: 3px; }
.k2 { margin: -4px 15px 0 auto; }
.xfx { height: 46px; background: #262626; display: flex; align-items: center; padding: 0 5px 0 5px; color: #fff; flex: none; font-size: 12px; }
.xbox { height: 26px; background: #383838; border: 1px solid #474747; display: flex; align-items: center; }
.name { width: 102px; padding: 0 6px 0 7px; justify-content: space-between; }
.f1 { margin: 0 14px 0 13px; }
.btns { width: 111px; padding: 0 12px; justify-content: space-between; color: #777; }
.btns em { font: italic 700 16px/18px "Liberation Serif", serif; color: #fff; }
.btns sub { font-size: 11px; vertical-align: -1px; }
.long { flex: 1; margin-left: 2px; justify-content: flex-end; padding-right: 4px; }
.xsheet { height: 561px; flex: none; position: relative; display: flex; background: #262626; border-bottom: 1px solid #a0a0a0; overflow: hidden; }
.xgrid { display: grid; grid-template-columns: 26px 115px 73px 145px 145px 23px 94px 175px 133px 144px repeat(7, 35px) 26px; grid-template-rows: 17px repeat(31, 18px); width: 1344px; font: 11.700px Lato, sans-serif; color: #000; flex: none; }
.xgrid > * { background: #fff; border-right: 1px solid #d4d4d4; border-bottom: 1px solid #d4d4d4; padding: 1px 2px 0; line-height: 17px; min-width: 0; position: relative; }
.xgrid .ch, .xgrid .rh { background: #262626; color: #d0d0d0; border-color: #5a5a5a; text-align: center; font: 12px/15px "Open Sans", sans-serif; padding: 0; }
.xgrid .ch { border-bottom-color: #a0a0a0; }
.xgrid .edge { padding-left: 9px; }
.xgrid .rh { line-height: 17px; border-right-color: #8c8c8c; border-bottom-color: #555; }
.xgrid .act { background: #666; color: #fff; }
.xgrid .corner { background: linear-gradient(135deg, transparent 50%, #666 50%) 13px 5px / 10px 9px no-repeat #262626; }
.xgrid .r { text-align: right; }
.xgrid .b { font-weight: 700; }
.xgrid .hd { background: #70ad47; border-color: #70ad47; color: #fff; font-weight: 700; }
.xgrid .hd, .xgrid .ph { font-size: 12.100px; }
.xgrid .ga { background: #e2efda; border-color: #e2efda; font-weight: 700; padding-left: 14px; }
.xgrid .tot { background: #c6e0b4; border-color: #c6e0b4; font-weight: 700; font-size: 12px; }
.xgrid .p { border-color: #fff; }
.xgrid .p.lastc { border-right-color: #d4d4d4; }
.xgrid .ind { padding-left: 14px; }
.xgrid .ph { background: #d9e1f2; border-color: #d9e1f2; font-weight: 700; }
.xgrid .ph, .xgrid .ln { border-bottom-color: #8ea9db; }
.xgrid .over { overflow: visible; z-index: 1; }
.fb { position: absolute; right: 0; top: 1px; width: 17px; height: 16px; border: 1px solid #a5a5b5; background: linear-gradient(#fff, #e9e9f2); display: grid; place-items: center; color: #555; }
.ex { position: absolute; left: 5px; top: 6px; width: 7px; height: 7px; border: 1px solid #9aa9c4; border-radius: 1px; background: #eef2fa; }
.ex::after { content: ""; position: absolute; left: 1px; top: 2px; width: 3px; height: 1px; background: #345; }
.xv { margin: 2px 0 0 4px; width: 15px; display: flex; flex-direction: column; background: #0a0a0a; }
.xv span { height: 15px; border: 1px solid #666; background: #383838; display: grid; place-items: center; color: #fff; }
.xv i { height: 136px; border: 1px solid #666; background: #383838; margin-top: 0; }
.xv .push { margin: auto 0 0; }
.cursor { position: absolute; left: 1107px; top: 15px; width: 38px; height: 21px; border: 2px solid #217346; }
.cursor i { position: absolute; right: -3px; bottom: -3px; width: 6px; height: 6px; background: #217346; border: 1px solid #fff; border-width: 1px 0 0 1px; }
.timeline, .slicer { position: absolute; background: #fff; border: 1px solid #5b9bd5; font: 12px Lato, sans-serif; z-index: 2; }
.timeline { left: 529px; top: 22px; width: 542px; height: 132px; padding: 0 6px; font-family: "Open Sans", sans-serif; font-size: 11px; color: #7f7f7f; }
.thead { height: 25px; border-bottom: 1px solid #5b9bd5; display: flex; justify-content: space-between; align-items: center; color: #b8b8b8; }
.thead b { font: 700 12px Lato, sans-serif; color: #000; }
.tper { height: 26px; display: flex; justify-content: space-between; align-items: center; color: #2e75b6; }
.mes { display: flex; align-items: center; gap: 8px; color: #8a8a8a; margin-right: 3px; font-size: 10px; }
.tyear { height: 14px; line-height: 14px; }
.months { height: 24px; align-items: center; font-size: 10px; letter-spacing: -.3px; }
.months, .tbar { display: grid; grid-template-columns: 31fr 28fr 31fr 30fr 31fr 30fr 31fr 31fr 30fr 31fr 30fr 31fr; width: 525px; margin-left: 1px; }
.tbar { height: 15px; background: linear-gradient(#bdd7ee 30%, #5b9bd5); }
.tbar i { border-right: 1px solid #8db8e0; }
.tscroll { margin: 6px 1px 0; height: 15px; display: flex; color: #777; }
.tscroll span { width: 14px; border: 1px solid #c0c0c0; display: grid; place-items: center; }
.tscroll i { flex: 1; border: 1px solid #c0c0c0; border-left: 0; }
.tscroll .gap { margin-left: 1px; }
.reg { left: 1110px; top: 37px; width: 206px; height: 158px; padding: 0 7px; }
.est { left: 1111px; top: 216px; width: 203px; height: 360px; padding: 0 7px; }
.shead { height: 25px; border-bottom: 1px solid #5b9bd5; display: flex; align-items: center; color: #555; padding-right: 2px; }
.shead b { color: #000; font-size: 12px; margin-right: auto; }
.mu { margin-right: 14px; color: #999; }
.opts { display: flex; flex-direction: column; gap: 3px; margin: 3px 0 0 1px; }
.est .opts { margin: 2px 0 0; }
.opts span { height: 23px; border: 1px solid #999; border-radius: 3px; background: #bdd7ee; line-height: 22px; padding-left: 7px; color: #111; }
.xtabs { height: 27px; flex: none; background: #262626; display: flex; align-items: center; color: #ddd; padding-left: 28px; }
.ar, .ar2 { color: #999; } .ar2 { margin-left: 24px; }
.xt { height: 24px; align-self: flex-start; display: grid; place-items: center; width: 74px; font: 13.500px Lato, sans-serif; }
.xt.on { margin-left: 40px; background: #fff; color: #217346; font-weight: 700; border-bottom: 2px solid #217346; }
.t2 { width: 71px; border-right: 1px solid #888; height: 20px; margin-top: 3px; padding-bottom: 3px; font-size: 13px; }
.add { margin-left: 32px; color: #e0e0e0; }
.xd { margin-left: 525px; color: #fff; }
.xh { margin-left: 14px; width: 509px; height: 15px; background: #0a0a0a; display: flex; }
.xh span { width: 15px; border: 1px solid #666; background: #383838; display: grid; place-items: center; color: #fff; }
.xh i { width: 452px; border: 1px solid #666; background: #383838; }
.xh .push { margin-left: auto; }
.xstat { height: 22px; flex: none; background: #262626; border-top: 1px solid #444; display: flex; align-items: center; padding-left: 12px; color: #fff; font-size: 11px; }
.s1 { margin-left: 46px; } .s2 { margin-left: 18px; } .s3 { margin-left: 3px; font-weight: 600; }
.views { margin-left: auto; display: flex; height: 21px; }
.views span { width: 41px; display: grid; place-items: center; }
.views .on { background: #505050; }
.z1 { margin-left: 3px; }
.zoom { width: 100px; height: 11px; margin-left: 6px; background: linear-gradient(#fff, #fff) 0 5px / 100% 1px no-repeat, linear-gradient(#fff, #fff) 50px 3px / 1px 5px no-repeat; }
.zoom i { display: block; width: 5px; height: 11px; background: #fff; margin-left: 43px; }
.z2 { margin-left: 5px; } .z3 { margin: 0 15px 0 12px; }
```

FILE: app.js
```js
const $ = (q) => document.querySelector(q);
const use = (id, w, h) => `<svg width="${w}" height="${h}"><use href="#${id}"/></svg>`;

/* shared sheet */
const gHead = ['Nro. Operación', 'Fecha Operación', 'Vendedor', 'Cliente', 'Estado', 'Región', 'Producto', 'Volumen [tn]', 'Precio unitario [$/tn]', 'Monto Total [$]'];
const gRows = `001|2/1/2019|Soledad Leal|Vedafuto SC S.L.|Santa Catarina|Sur|KMAX-019|0,620|270|167,40
002|2/1/2019|Soledad Leal|Samoa Agroexport SC S.A.|Santa Catarina|Sur|PSOIL-015|4,420|250|1105,00
003|2/1/2019|Ignacio Padron|Rujitova S.A.|Paraná|Sur|NAZOE-009|6,830|60|409,80
004|3/1/2019|Felicidad Montes|Samoa Agroexport RGDS S.A.|Río Grande del Sur|Sur|NAZOE-009|3,410|60|204,60
005|3/1/2019|Marcel Suarez|Huwigupa S.A.|Minas Gerais|Sudeste|PSOIL-015|2,620|250|655,00
006|4/1/2019|Felicidad Montes|Samoa Agroexport RGDS S.A.|Río Grande del Sur|Sur|KMAX-021|0,780|180|140,40
007|5/1/2019|Ignacio Padron|Rujitova S.A.|Paraná|Sur|PSOIL-017|2,900|140|406,00
008|5/1/2019|Clara Lorente|Nabelade S.A.|Espírito Santo|Sudeste|NAZOE-008|3,227|270|871,20
009|6/1/2019|Ignacio Padron|Rujitova S.A.|Paraná|Sur|KMAX-021|2,020|180|363,60
010|6/1/2019|Soledad Leal|Samoa Agroexport SC S.A.|Santa Catarina|Sur|KMAX-021|2,230|180|401,40
011|6/1/2019|Laila Cristobal|Hecatike MGDS S.A.|Mato Grosso del Sur|Centro-Oeste|NAZOE-009|3,507|60|210,40
012|7/1/2019|Soledad Leal|Vedafuto SC S.L.|Santa Catarina|Sur|NAZOE-009|0,700|60|42,00
013|7/1/2019|Felicidad Montes|Samoa Agroexport RGDS S.A.|Río Grande del Sur|Sur|KMAX-020|4,360|370|1613,20
014|8/1/2019|Trinidad Asensio|Hecatike MG S.A.|Mato Grosso|Centro-Oeste|PSOIL-017|1,007|140|140,93
015|8/1/2019|Marcel Suarez|Huwigupa S.A.|Minas Gerais|Sudeste|PSOIL-017|1,980|140|277,20
016|9/1/2019|Soledad Leal|Samoa Agroexport SC S.A.|Santa Catarina|Sur|KMAX-021|0,970|180|174,60
017|9/1/2019|Marcel Suarez|Huwigupa S.A.|Minas Gerais|Sudeste|PSOIL-015|2,753|250|688,33
018|10/1/2019|Soledad Leal|Integrales Solt S.R.L|Santa Catarina|Sur|PSOIL-016|4,510|350|1578,50
|||||||||`.split('\n').map((r) => r.split('|'));
const right = [0, 1, 7, 8, 9];
let g = '<div class="gch corner"></div>';
[...'ABCDEFGHIJK'].forEach((c, i) => { g += `<div class="gch${i ? '' : ' sel'}">${c}</div>`; });
g += '<div class="gch gr sel">1</div>' + gHead.map((t, i) => `<div class="h${i ? '' : ' cur'}">${t}</div>`).join('') + '<div class="w"></div>';
gRows.forEach((r, n) => {
  g += `<div class="gch gr">${r[0] ? n + 2 : ''}</div>`;
  r.forEach((t, i) => { g += `<div class="${n % 2 ? 'e' : 'o'}${right.includes(i) ? ' r' : ''}${i === 6 ? ' code' : ''}">${t}</div>`; });
  g += '<div class="w"></div>';
});
$('#ggrid').innerHTML = g;

/* pivot sheet: first pivot in A:D, second in F:I */
const p1 = {
  2: '+Clara Lorente|KMAX-019|1,466|1,569', 3: '|KMAX-021|4,372|4,678', 4: '|NAZOE-007|2,921|3,126', 5: '|NAZOE-008|1,391|1,488',
  6: '|NAZOE-009|205|219', 7: '|PSOIL-015|318|341', 8: '|PSOIL-016|116|124', 9: '|PSOIL-017|1,171|1,253', 10: '=Total Clara Lorente||11,960|12,797',
  12: '+Felicidad Montes|KMAX-019|7,339|7,853', 13: '|KMAX-020|5,994|6,413', 14: '|KMAX-021|7,875|8,426', 15: '|NAZOE-007|3,964|4,241',
  16: '|NAZOE-009|987|1,056', 17: '|PSOIL-015|1,475|1,578', 18: '|PSOIL-016|2,351|2,515', 19: '|PSOIL-017|2,045|2,188', 20: '=Total Felicidad Montes||32,029|34,271',
  22: '+Hamza Bellido|KMAX-019|4,683|5,011', 23: '|KMAX-020|3,788|4,053', 24: '|KMAX-021|3,708|3,967', 25: '|NAZOE-007|733|784',
  26: '|NAZOE-008|2,209|2,363', 27: '|NAZOE-009|1,167|1,249', 28: '|PSOIL-015|4,115|4,403', 29: '|PSOIL-016|2,155|2,306', 30: '|PSOIL-017|2,934|3,140', 31: '=|||'
};
const p2 = `+Centro-Oeste||660.7|124,354
Centro-Oeste|Hecatike Goiás S.A.|19.9|4,166
Centro-Oeste|Hecatike MG S.A.|136.4|25,144
Centro-Oeste|Hecatike MGDS S.A.|80.7|15,410
Centro-Oeste|Lakuleqo S.A.|184.2|33,093
Centro-Oeste|Qonagono S.L.|85.8|15,704
Centro-Oeste|Wadozupe S.A.|153.6|30,838
+Nordeste||64.7|15,542
Nordeste|Vedafuto Bahía S.L.|64.7|15,542
+Sudeste||414.6|83,213
Sudeste|Fubaduxu S.A.|123.7|25,491
Sudeste|Huwigupa S.A.|200.3|42,884
Sudeste|Nabelade S.A.|65.4|11,960
Sudeste|Rilixesu S.A.|25.2|2,879
+Sur||717.3|145,456
Sur|Integrales Solt S.R.L|50.9|12,383
Sur|Rujitova S.A.|120.4|24,743
Sur|Samoa Agroexport Paraná S.A.|82.7|15,928
Sur|Samoa Agroexport RGDS S.A.|105.5|23,525
Sur|Samoa Agroexport SC S.A.|105.4|19,662`.split('\n');
const cell = (c, t = '') => `<div class="${c}">${t}</div>`;
const btn = `<i class="fb">${use('caret', 7, 4)}</i>`;
const money = (v) => (v ? 'S/ ' + v : '');
let x = cell('ch corner');
[...'ABCDEFGHIJKLMNOPQ'].forEach((c) => { x += cell('ch' + (c === 'K' ? ' act' : c === 'Q' ? ' edge' : ''), c); });
for (let n = 1; n <= 31; n++) {
  x += cell('rh' + (n === 1 ? ' act' : ''), n < 31 ? n : '');
  if (n === 1) {
    x += cell('hd', 'Vendedor' + btn) + cell('hd', 'Producto' + btn) + cell('hd', 'Suma de Monto Total [$]') + cell('hd', 'Suma de Proyección2020');
  } else if (p1[n]) {
    const r = p1[n].split('|');
    if (r[0][0] === '=') x += cell('tot over', r[0].slice(1)) + cell('tot') + cell('tot r', money(r[2])) + cell('tot r', money(r[3]));
    else x += cell('ga', r[0] ? '<i class="ex"></i>' + r[0].slice(1) : '') + cell('', r[1]) + cell('r', money(r[2])) + cell('r', money(r[3]));
  } else x += cell('').repeat(4);
  x += cell('');
  if (n === 10) {
    x += cell('ph', 'Región' + btn) + cell('ph', 'Cliente' + btn) + cell('ph', 'Suma de Volumen [tn]') + cell('ph', 'Suma de Monto Total [$]');
  } else if (n > 10 && p2[n - 11]) {
    const r = p2[n - 11].split('|');
    const k = r[0][0] === '+' ? 'p ln b' : 'p';
    x += cell(k + ' ind', k === 'p' ? r[0] : '<i class="ex"></i>' + r[0].slice(1)) + cell(k, r[1]) + cell(k + ' r', r[2]) + cell(k + ' r lastc', money(r[3]));
  } else x += cell(n > 10 ? 'p' : '').repeat(4);
  x += cell('').repeat(8);
}
$('#xgrid').innerHTML = x;

$('#months').innerHTML = 'ENE FEB MAR ABR MAY JUN JUL AGO SET OCT NOV DIC'.split(' ').map((m) => `<span>${m}</span>`).join('');
const opts = (s) => s.split('|').map((t) => `<span>${t}</span>`).join('');
$('#reg').innerHTML = opts('Centro-Oeste|Nordeste|Sudeste|Sur');
$('#est').innerHTML = opts('Bahía|Distrito Federal|Espírito Santo|Goiás|Mato Grosso|Mato Grosso del Sur|Minas Gerais|Paraná|Río de Janeiro|Río Grande del Sur|Santa Catarina|São Paulo');

const tiles = [['win'], ['search'], ['edge'], ['chrome', 'run', 'g', 'A'], ['wa', '', 'n', '57'], ['one'], ['excel', 'on'], ['note'], ['code', 'run'], ['dir', 'run'], ['brave'], ['chrome', 'run', 'p', ''], ['pad', 'run'], ['chrome', 'run', 'r', 'A']];
document.querySelectorAll('.tiles').forEach((el) => {
  el.innerHTML = tiles.map(([id, st = '', k, t]) => `<div class="tile ${st}">${use('t-' + id, 24, 24)}${k ? `<span class="pip ${k}">${t}</span>` : ''}</div>`).join('');
});

/* track labels so that each one fills its slot */
document.querySelectorAll('[data-w]').forEach((el) => {
  const w = +el.dataset.w;
  el.style.display = 'inline-block';
  const n = el.textContent.length;
  el.style.letterSpacing = ((w - el.getBoundingClientRect().width) / n).toFixed(3) + 'px';
  el.style.width = w + 'px';
});
```
